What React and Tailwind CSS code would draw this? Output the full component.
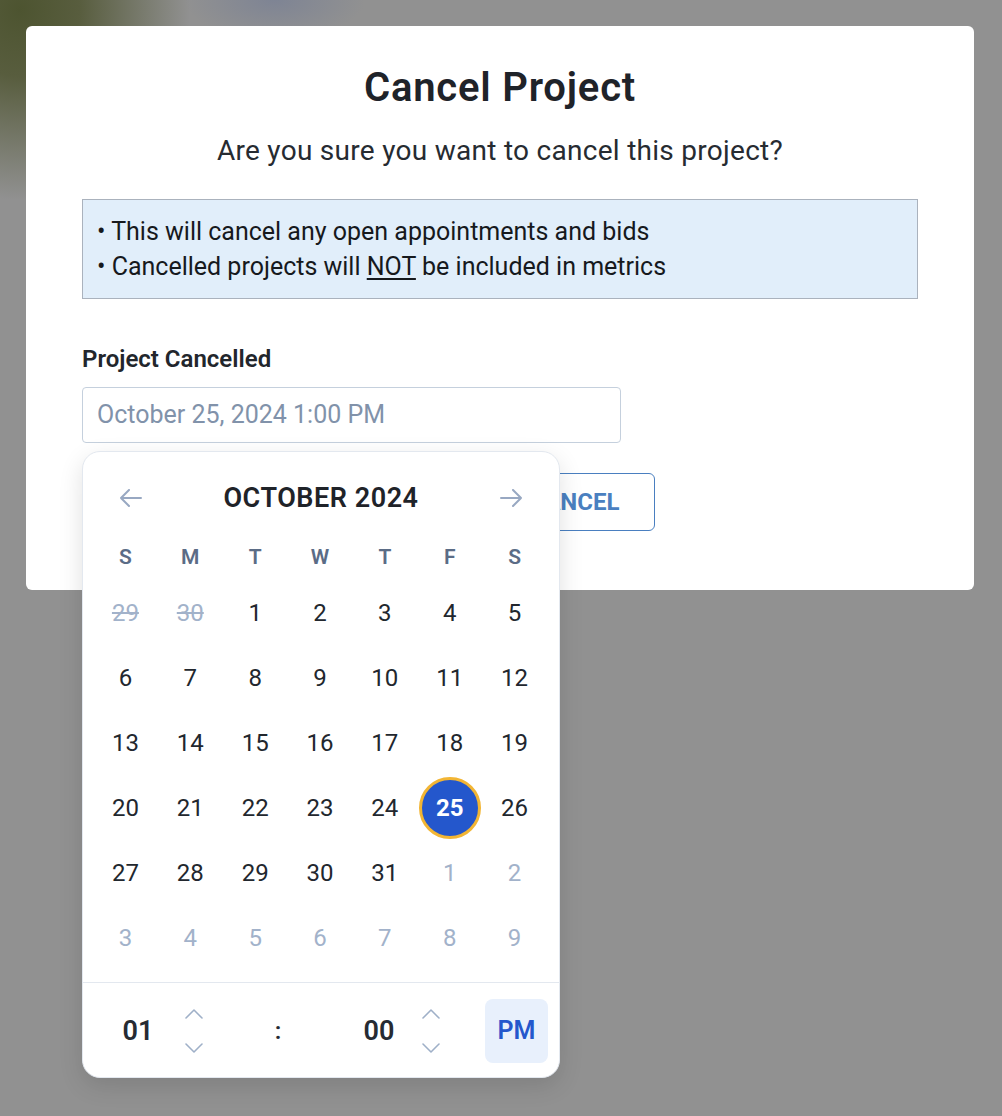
import React from 'react';

const Arrow = ({ dir }) => (
  <svg width="22" height="18" viewBox="0 0 22 18" fill="none" stroke="#98a8c2" strokeWidth="2" strokeLinecap="round" strokeLinejoin="round">
    {dir === 'left' ? <path d="M21 9H1M9 1L1 9l8 8" /> : <path d="M1 9h20M13 1l8 8-8 8" />}
  </svg>
);

const Chevron = ({ up }) => (
  <svg width="18" height="10" viewBox="0 0 18 10" fill="none" stroke="#9fb0c8" strokeWidth="1.6" strokeLinecap="round" strokeLinejoin="round">
    {up ? <path d="M1 9l8-8 8 8" /> : <path d="M1 1l8 8 8-8" />}
  </svg>
);

const weeks = [
  [['29', 'strike'], ['30', 'strike'], ['1'], ['2'], ['3'], ['4'], ['5']],
  [['6'], ['7'], ['8'], ['9'], ['10'], ['11'], ['12']],
  [['13'], ['14'], ['15'], ['16'], ['17'], ['18'], ['19']],
  [['20'], ['21'], ['22'], ['23'], ['24'], ['25', 'selected'], ['26']],
  [['27'], ['28'], ['29'], ['30'], ['31'], ['1', 'muted'], ['2', 'muted']],
  [['3', 'muted'], ['4', 'muted'], ['5', 'muted'], ['6', 'muted'], ['7', 'muted'], ['8', 'muted'], ['9', 'muted']],
];

const DayCell = ({ label, kind }) => {
  if (kind === 'selected') {
    return (
      <div className="h-[65px] flex items-center justify-center">
        <div className="w-[62px] h-[62px] rounded-full bg-[#2457cc] border-[3px] border-[#f2b534] flex items-center justify-center text-white font-bold text-[24px]">
          {label}
        </div>
      </div>
    );
  }
  const color = kind === 'strike' ? 'text-[#a2b2ca] line-through' : kind === 'muted' ? 'text-[#a2b2ca]' : 'text-[#22272e]';
  return <div className={`h-[65px] flex items-center justify-center text-[24px] ${color}`}>{label}</div>;
};

const DatePicker = () => (
  <div className="absolute left-0 top-[64px] w-[478px] bg-white rounded-[18px] border border-[#e3e8ef] shadow-[0_8px_24px_rgba(0,0,0,0.12)] z-10">
    <div className="mt-[20px] h-[52px] px-[37px] flex items-center justify-between">
      <Arrow dir="left" />
      <div className="text-[27px] font-semibold tracking-[0.02em] text-[#1f2329]">OCTOBER 2024</div>
      <Arrow dir="right" />
    </div>
    <div className="mt-[12px] pl-[10px] pr-[12px] grid grid-cols-7 h-[44px] items-center">
      {['S', 'M', 'T', 'W', 'T', 'F', 'S'].map((d, i) => (
        <div key={i} className="text-center text-[21px] font-semibold text-[#5b6c86]">{d}</div>
      ))}
    </div>
    <div className="mb-[12px] pl-[10px] pr-[12px] grid grid-cols-7">
      {weeks.flat().map(([label, kind], i) => (
        <DayCell key={i} label={label} kind={kind} />
      ))}
    </div>
    <div className="border-t border-[#e3e8ef] pt-[16px] pb-[14px] pl-[25px] flex items-center">
      <div className="w-[60px] text-center text-[27px] font-semibold text-[#262b33]">01</div>
      <div className="w-[52px] flex flex-col items-center gap-[24px]">
        <Chevron up />
        <Chevron />
      </div>
      <div className="w-[116px] text-center text-[24px] font-semibold text-[#262b33]">:</div>
      <div className="ml-[13px] w-[60px] text-center text-[27px] font-semibold text-[#262b33]">00</div>
      <div className="ml-[2px] w-[40px] flex flex-col items-center gap-[24px]">
        <Chevron up />
        <Chevron />
      </div>
      <div className="ml-[34px] w-[63px] h-[64px] rounded-[8px] bg-[#e8f0fc] flex items-center justify-center text-[25px] font-semibold text-[#2457cc]">
        PM
      </div>
    </div>
  </div>
);

export default function App() {
  return (
    <div
      className="min-h-[1116px] bg-[#919191] bg-[image:radial-gradient(ellipse_170px_190px_at_20px_10px,#4d5430_0%,#585d3e_35%,rgba(145,145,145,0)_100%),radial-gradient(ellipse_90px_40px_at_275px_0px,#7e8494_0%,rgba(145,145,145,0)_100%)] p-[26px] pr-[28px]"
      style={{ fontFamily: 'Roboto, "Noto Sans", Arial, sans-serif' }}
    >
      <div className="w-[948px] bg-white rounded-[6px] px-[56px] pt-[38px] pb-[59px]">
        <h1 className="text-center text-[40px] leading-[48px] font-semibold tracking-[0.02em] text-[#1f2329]">Cancel Project</h1>
        <p className="mt-[22px] text-center text-[28px] leading-[34px] tracking-[0.01em] text-[#262b31]">
          Are you sure you want to cancel this project?
        </p>
        <div className="mt-[31px] bg-[#e1eefa] border border-[#aab2bd] px-[14px] py-[14px] text-[25px] leading-[35px] text-[#16191d]">
          <div>• This will cancel any open appointments and bids</div>
          <div>
            • Cancelled projects will <span className="underline underline-offset-[3px]">NOT</span> be included in metrics
          </div>
        </div>
        <div className="mt-[45px] text-[24px] leading-[30px] font-semibold text-[#22262c]">Project Cancelled</div>
        <div className="relative mt-[13px]">
          <div className="w-[539px] h-[56px] border border-[#c5d0dd] rounded-[4px] px-[14px] flex items-center text-[25px] text-[#8192aa]">
            October 25, 2024 1:00 PM
          </div>
          <DatePicker />
          <div className="mt-[30px] flex justify-center gap-[16px]">
            <button className="w-[132px] h-[58px] rounded-[6px] bg-[#3f75bd] text-white font-bold text-[24px]">SAVE</button>
            <button className="w-[162px] h-[58px] rounded-[6px] border border-[#4a7fc0] text-[#4a80c0] font-bold text-[24px]">
              CANCEL
            </button>
          </div>
        </div>
      </div>
    </div>
  );
}
